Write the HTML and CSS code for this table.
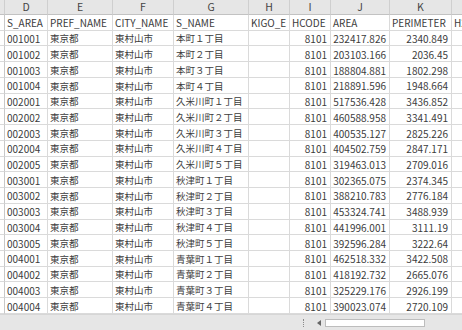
FILE: index.html
```html
<!DOCTYPE html>
<html lang="ja">
<head>
<meta charset="utf-8">
<link rel="stylesheet" href="styles.css">
</head>
<body>
<div class="sheet">
  <div class="grid">
    <div class="h"></div><div class="h">D</div><div class="h">E</div><div class="h">F</div><div class="h">G</div><div class="h">H</div><div class="h">I</div><div class="h">J</div><div class="h">K</div><div class="h"></div>

    <div class="c s"></div><div class="c">S_AREA</div><div class="c">PREF_NAME</div><div class="c">CITY_NAME</div><div class="c">S_NAME</div><div class="c">KIGO_E</div><div class="c">HCODE</div><div class="c">AREA</div><div class="c">PERIMETER</div><div class="c">H2</div>

    <div class="c s"></div><div class="c">001001</div><div class="c ja">東京都</div><div class="c ja">東村山市</div><div class="c ja">本町１丁目</div><div class="c"></div><div class="c r">8101</div><div class="c r">232417.826</div><div class="c r">2340.849</div><div class="c"></div>
    <div class="c s"></div><div class="c">001002</div><div class="c ja">東京都</div><div class="c ja">東村山市</div><div class="c ja">本町２丁目</div><div class="c"></div><div class="c r">8101</div><div class="c r">203103.166</div><div class="c r">2036.45</div><div class="c"></div>
    <div class="c s"></div><div class="c">001003</div><div class="c ja">東京都</div><div class="c ja">東村山市</div><div class="c ja">本町３丁目</div><div class="c"></div><div class="c r">8101</div><div class="c r">188804.881</div><div class="c r">1802.298</div><div class="c"></div>
    <div class="c s"></div><div class="c">001004</div><div class="c ja">東京都</div><div class="c ja">東村山市</div><div class="c ja">本町４丁目</div><div class="c"></div><div class="c r">8101</div><div class="c r">218891.596</div><div class="c r">1948.664</div><div class="c"></div>
    <div class="c s"></div><div class="c">002001</div><div class="c ja">東京都</div><div class="c ja">東村山市</div><div class="c ja">久米川町１丁目</div><div class="c"></div><div class="c r">8101</div><div class="c r">517536.428</div><div class="c r">3436.852</div><div class="c"></div>
    <div class="c s"></div><div class="c">002002</div><div class="c ja">東京都</div><div class="c ja">東村山市</div><div class="c ja">久米川町２丁目</div><div class="c"></div><div class="c r">8101</div><div class="c r">460588.958</div><div class="c r">3341.491</div><div class="c"></div>
    <div class="c s"></div><div class="c">002003</div><div class="c ja">東京都</div><div class="c ja">東村山市</div><div class="c ja">久米川町３丁目</div><div class="c"></div><div class="c r">8101</div><div class="c r">400535.127</div><div class="c r">2825.226</div><div class="c"></div>
    <div class="c s"></div><div class="c">002004</div><div class="c ja">東京都</div><div class="c ja">東村山市</div><div class="c ja">久米川町４丁目</div><div class="c"></div><div class="c r">8101</div><div class="c r">404502.759</div><div class="c r">2847.171</div><div class="c"></div>
    <div class="c s"></div><div class="c">002005</div><div class="c ja">東京都</div><div class="c ja">東村山市</div><div class="c ja">久米川町５丁目</div><div class="c"></div><div class="c r">8101</div><div class="c r">319463.013</div><div class="c r">2709.016</div><div class="c"></div>
    <div class="c s"></div><div class="c">003001</div><div class="c ja">東京都</div><div class="c ja">東村山市</div><div class="c ja">秋津町１丁目</div><div class="c"></div><div class="c r">8101</div><div class="c r">302365.075</div><div class="c r">2374.345</div><div class="c"></div>
    <div class="c s"></div><div class="c">003002</div><div class="c ja">東京都</div><div class="c ja">東村山市</div><div class="c ja">秋津町２丁目</div><div class="c"></div><div class="c r">8101</div><div class="c r">388210.783</div><div class="c r">2776.184</div><div class="c"></div>
    <div class="c s"></div><div class="c">003003</div><div class="c ja">東京都</div><div class="c ja">東村山市</div><div class="c ja">秋津町３丁目</div><div class="c"></div><div class="c r">8101</div><div class="c r">453324.741</div><div class="c r">3488.939</div><div class="c"></div>
    <div class="c s"></div><div class="c">003004</div><div class="c ja">東京都</div><div class="c ja">東村山市</div><div class="c ja">秋津町４丁目</div><div class="c"></div><div class="c r">8101</div><div class="c r">441996.001</div><div class="c r">3111.19</div><div class="c"></div>
    <div class="c s"></div><div class="c">003005</div><div class="c ja">東京都</div><div class="c ja">東村山市</div><div class="c ja">秋津町５丁目</div><div class="c"></div><div class="c r">8101</div><div class="c r">392596.284</div><div class="c r">3222.64</div><div class="c"></div>
    <div class="c s"></div><div class="c">004001</div><div class="c ja">東京都</div><div class="c ja">東村山市</div><div class="c ja">青葉町１丁目</div><div class="c"></div><div class="c r">8101</div><div class="c r">462518.332</div><div class="c r">3422.508</div><div class="c"></div>
    <div class="c s"></div><div class="c">004002</div><div class="c ja">東京都</div><div class="c ja">東村山市</div><div class="c ja">青葉町２丁目</div><div class="c"></div><div class="c r">8101</div><div class="c r">418192.732</div><div class="c r">2665.076</div><div class="c"></div>
    <div class="c s"></div><div class="c">004003</div><div class="c ja">東京都</div><div class="c ja">東村山市</div><div class="c ja">青葉町３丁目</div><div class="c"></div><div class="c r">8101</div><div class="c r">325229.176</div><div class="c r">2926.199</div><div class="c"></div>
    <div class="c s"></div><div class="c">004004</div><div class="c ja">東京都</div><div class="c ja">東村山市</div><div class="c ja">青葉町４丁目</div><div class="c"></div><div class="c r">8101</div><div class="c r">390023.074</div><div class="c r">2720.109</div><div class="c"></div>
  </div>
</div>
<div class="hbar">
  <div class="grip"></div>
  <div class="arrow"><svg width="4" height="6" viewBox="0 0 4 6"><path d="M4 0 L0 3 L4 6 Z" fill="#666"/></svg></div>
  <div class="track"></div>
</div>
</body>
</html>
```
FILE: styles.css
```css
html, body {
  margin: 0;
  padding: 0;
  background: #ffffff;
  overflow: hidden;
  width: 462px;
  height: 330px;
}
body {
  font-family: "Noto Sans CJK JP", "Noto Sans", sans-serif;
  font-size: 10px;
  color: #3c3c3c;
}
.sheet {
  height: 314px;
  overflow: hidden;
}
.grid {
  display: grid;
  grid-template-columns: 5px 43px 65px 61px 75px 41px 41px 59px 62px 60px;
  grid-template-rows: 15px;
  grid-auto-rows: 15.74px;
  width: 512px;
}
.h, .c {
  box-sizing: border-box;
  display: flex;
  align-items: center;
  white-space: nowrap;
  overflow: hidden;
  line-height: 1;
}
.h {
  background: #e6e6e6;
  border-right: 1px solid #cfcfcf;
  border-bottom: 1px solid #c2c2c2;
  justify-content: center;
  color: #444444;
  font-size: 10.5px;
  padding-top: 1px;
}
.c {
  border-right: 1px solid #dadada;
  border-bottom: 1px solid #dadada;
  padding: 2px 2px 0 2px;
}
.s {
  border-right-color: #c8c8c8;
}
.r {
  justify-content: flex-end;
  padding-right: 3px;
}
.ja {
  font-size: 9.5px;
}
.hbar {
  height: 16px;
  background: #e6e6e6;
  box-sizing: border-box;
  border-top: 1px solid #d6d6d6;
  display: flex;
  align-items: center;
  padding-left: 303px;
}
.grip {
  width: 0;
  height: 8px;
  border-left: 1px dotted #8a8a8a;
}
.arrow {
  width: 10px;
  height: 9px;
  margin-left: 10px;
  display: flex;
  align-items: center;
  justify-content: center;
}
.track {
  width: 100px;
  height: 8px;
  box-sizing: border-box;
  background: #ffffff;
  border: 1px solid #bdbdbd;
  margin-left: 1px;
}
```
